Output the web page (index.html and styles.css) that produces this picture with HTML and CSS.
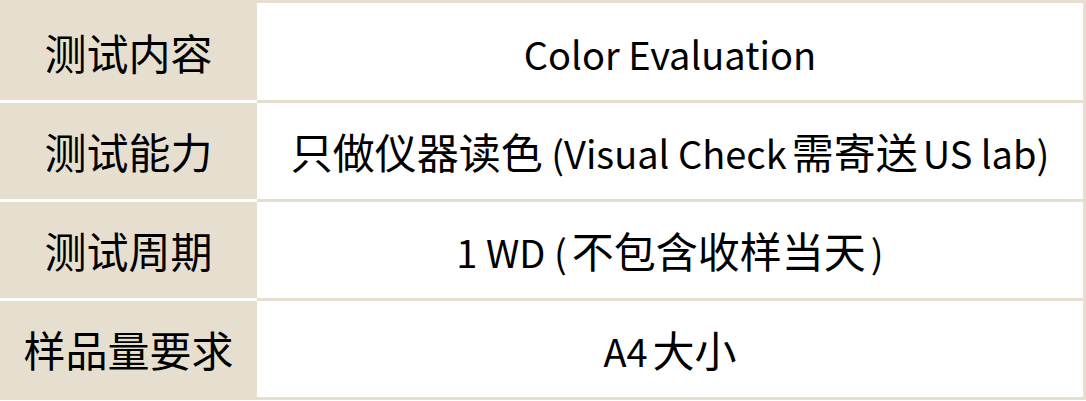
FILE: index.html
```html
<!DOCTYPE html>
<html lang="zh-CN">
<head>
    <meta charset="UTF-8">
    <meta name="viewport" content="width=device-width, initial-scale=1.0">
    <title>测试信息</title>
    <link rel="stylesheet" href="styles.css">
</head>
<body>
    <table class="info-table">
        <tr class="first">
            <th>测试内容</th>
            <td><span class="latin">Color Evaluation</span></td>
        </tr>
        <tr>
            <th>测试能力</th>
            <td>只做仪器读色<span class="latin sp-after"> (Visual Check</span>需寄送<span class="latin sp-before">US lab)</span></td>
        </tr>
        <tr>
            <th>测试周期</th>
            <td><span class="latin sp-after">1 WD (</span>不包含收样当天<span class="latin sp-before">)</span></td>
        </tr>
        <tr class="last">
            <th>样品量要求</th>
            <td><span class="latin sp-after">A4</span>大小</td>
        </tr>
    </table>
</body>
</html>
```

FILE: styles.css
```css
body {
    margin: 0;
    background: #fff;
    font-family: "Noto Sans CJK SC", "Noto Sans", sans-serif;
    color: #000;
}
.info-table {
    width: 1086px;
    border-collapse: separate;
    border-spacing: 0;
}
.info-table th,
.info-table td {
    padding: 0;
    height: 96px;
    text-align: center;
    vertical-align: middle;
    font-size: 42px;
    font-weight: normal;
    line-height: 1;
}
.info-table th {
    width: 257px;
    background-color: #e6dfcf;
    border-top: 3px solid #fff;
}
.info-table td {
    border-top: 3px solid #e6dfcf;
    border-right: 3px solid #e6dfcf;
}
.info-table .latin {
    font-size: 38px;
}
.info-table .sp-before {
    margin-left: 5px;
}
.info-table .sp-after {
    margin-right: 5px;
}
.info-table tr.first th {
    border-top-color: #e6dfcf;
}
.info-table tr.first th,
.info-table tr.first td {
    height: 97px;
}
.info-table tr.last th,
.info-table tr.last td {
    border-bottom: 3px solid #e6dfcf;
}
```
